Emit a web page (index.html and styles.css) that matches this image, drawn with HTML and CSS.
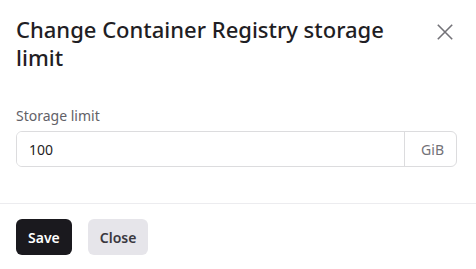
FILE: index.html
```html
<!DOCTYPE html>
<html>
<head>
<meta charset="utf-8">
<link rel="stylesheet" href="styles.css">
</head>
<body>
<div class="modal">
  <div class="modal-header">
    <h2 class="modal-title">Change Container Registry storage limit</h2>
    <button class="close-btn" aria-label="Close">
      <svg width="16" height="16" viewBox="0 0 16 16"><path d="M0.8 0.8L15.2 15.2M15.2 0.8L0.8 15.2" stroke="#737278" stroke-width="1.6" fill="none"/></svg>
    </button>
  </div>
  <div class="modal-body">
    <label class="field-label">Storage limit</label>
    <div class="input-group">
      <input class="input" type="text" value="100">
      <span class="addon">GiB</span>
    </div>
  </div>
  <div class="modal-footer">
    <button class="btn btn-primary">Save</button>
    <button class="btn btn-secondary">Close</button>
  </div>
</div>
</body>
</html>
```
FILE: styles.css
```css
* { box-sizing: border-box; }
html, body { margin: 0; padding: 0; background: #fff; }
body { font-family: "Noto Sans", sans-serif; color: #1f1e24; }
.modal { width: 476px; }
.modal-header {
  display: flex;
  align-items: flex-start;
  justify-content: space-between;
  padding: 15px 15px 0 16px;
}
.modal-title {
  margin: 0;
  flex: 1;
  font-size: 22px;
  line-height: 28px;
  font-weight: 500;
  color: #1f1e24;
  max-width: 400px;
}
.close-btn {
  border: 0;
  background: transparent;
  padding: 5px 8px;
  margin: 1px 0 0 0;
  width: 32px;
  height: 32px;
  display: flex;
  align-items: center;
  justify-content: center;
  cursor: pointer;
}
.close-btn svg { display: block; }
.modal-body {
  padding: 35px 16px 36px 16px;
}
.field-label {
  display: block;
  font-size: 14px;
  line-height: 20px;
  color: #626168;
  margin-bottom: 5px;
}
.input-group {
  display: flex;
  width: 441px;
  height: 36px;
  border: 1px solid #dcdcde;
  border-radius: 6px;
  overflow: hidden;
}
.input {
  flex: 1;
  border: 0;
  outline: none;
  padding: 0 12px;
  font-family: "Noto Sans", sans-serif;
  font-size: 14px;
  color: #1f1e24;
  min-width: 0;
  background: #fff;
}
.addon {
  display: flex;
  align-items: center;
  padding: 0 12px 0 16px;
  border-left: 1px solid #dcdcde;
  font-size: 14px;
  color: #737278;
}
.modal-footer {
  border-top: 1px solid #ececef;
  padding: 15px 16px 16px 16px;
  display: flex;
  gap: 16px;
}
.btn {
  height: 36px;
  border: 0;
  border-radius: 6px;
  padding: 0 12px;
  font-family: "Noto Sans", sans-serif;
  font-size: 14px;
  font-weight: 600;
  cursor: pointer;
}
.btn-primary { background: #1a191e; color: #fff; }
.btn-secondary { background: #e6e5ea; color: #3a383f; }
```
